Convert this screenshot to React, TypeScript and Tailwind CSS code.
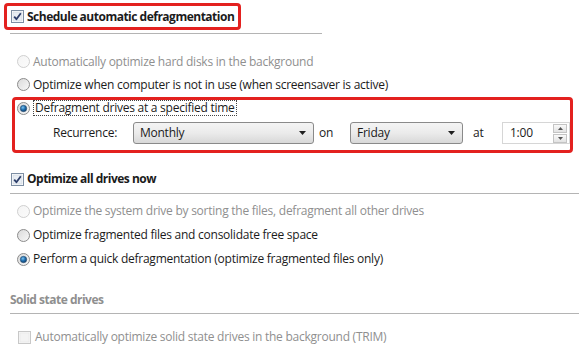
import React from "react";

const Radio = ({ checked = false, disabled = false }: { checked?: boolean; disabled?: boolean }) => (
  <svg width="13" height="13" viewBox="0 0 13 13" className="shrink-0">
    <defs>
      <linearGradient id={`rg${disabled ? "d" : "e"}`} x1="0" y1="0" x2="1" y2="1">
        <stop offset="0" stopColor={disabled ? "#f4f4f4" : "#d9d9d9"} />
        <stop offset="1" stopColor={disabled ? "#fbfbfb" : "#f9f9f9"} />
      </linearGradient>
      <radialGradient id="rdot" cx="0.4" cy="0.35" r="0.7">
        <stop offset="0" stopColor="#7fc4f0" />
        <stop offset="0.5" stopColor="#1f6fb0" />
        <stop offset="1" stopColor="#0d3a66" />
      </radialGradient>
    </defs>
    <circle cx="6.5" cy="6.5" r="6" fill={`url(#rg${disabled ? "d" : "e"})`} stroke={disabled ? "#cfcfcf" : "#8c8c8c"} strokeWidth="1" />
    {checked && <circle cx="6.5" cy="6.5" r="3.2" fill="url(#rdot)" stroke="#2b4d6e" strokeWidth="0.6" />}
  </svg>
);

const Check = ({ checked = false, disabled = false }: { checked?: boolean; disabled?: boolean }) => (
  <svg width="13" height="13" viewBox="0 0 13 13" className="shrink-0">
    <rect x="0.5" y="0.5" width="12" height="12" fill={disabled ? "#f7f7f7" : "#ffffff"} stroke={disabled ? "#c8c8c8" : "#7d8ea3"} />
    <rect x="2" y="2" width="9" height="9" fill={disabled ? "#f3f3f3" : "#e8edf3"} stroke={disabled ? "#e6e6e6" : "#c9d3de"} strokeWidth="0.6" />
    {checked && <path d="M3.2 6.6 L5.4 9.2 L9.8 3.2" fill="none" stroke="#2c3e6a" strokeWidth="1.8" strokeLinejoin="round" />}
  </svg>
);

const Arrow = () => (
  <svg width="7" height="4" viewBox="0 0 7 4">
    <path d="M0 0 L7 0 L3.5 4 Z" fill="#1f1f1f" />
  </svg>
);

const Select = ({ value, w }: { value: string; w: string }) => (
  <div className={`${w} h-[22px] flex items-center justify-between pl-[6px] pr-[7px] rounded-[3px] border border-[#8a8a8a] bg-gradient-to-b from-[#f4f4f4] via-[#ebebeb] to-[#d8d8d8] text-[#1a1a1a]`}>
    <span>{value}</span>
    <Arrow />
  </div>
);

export default function App() {
  return (
    <div className="w-[579px] h-[359px] bg-white overflow-hidden text-[12px] leading-none tracking-[-0.25px] whitespace-nowrap text-[#1b1b1b] [font-family:'Open_Sans','Noto_Sans',sans-serif]">
      <div className="pt-[3px] pl-[4px]">
        <div className="w-[237px] h-[27px] border-[3px] border-[#e3211f] rounded-[4px] flex items-center pl-[4px] gap-[3px]">
          <Check checked />
          <span className="font-bold text-[12px] tracking-[-0.5px]">Schedule automatic defragmentation</span>
        </div>
      </div>
      <div className="mt-[3px] ml-[10px] w-[312px] h-px bg-[#b4b4b4]" />
      <div className="mt-[16px] pl-[17px]">
        <div className="h-[23px] flex items-center gap-[3px] text-[#8f8f8f]">
          <Radio disabled />
          <span>Automatically optimize hard disks in the background</span>
        </div>
        <div className="h-[23px] flex items-center gap-[3px]">
          <Radio />
          <span>Optimize when computer is not in use (when screensaver is active)</span>
        </div>
      </div>
      <div className="mt-px ml-[12px] w-[561px] h-[56px] border-[3px] border-[#e3211f] rounded-[4px] flex flex-col">
        <div className="h-[16px] pl-[2px] flex items-center gap-[3px]">
          <Radio checked />
          <span className="border border-dotted border-[#444] px-px py-[1px]">Defragment drives at a specified time</span>
        </div>
        <div className="mt-[6px] h-[22px] flex items-center">
          <span className="ml-[38px] w-[80px]">Recurrence:</span>
          <Select value="Monthly" w="w-[181px]" />
          <span className="ml-[5px] w-[31px]">on</span>
          <Select value="Friday" w="w-[113px]" />
          <span className="ml-[10px] w-[29px]">at</span>
          <div className="w-[68px] h-[22px] flex items-center justify-between border border-[#d6d6d6] bg-white pl-[7px] pr-[2px]">
            <span>1:00</span>
            <div className="flex flex-col gap-px">
              <div className="w-[14px] h-[9px] border border-[#c4c4c4] bg-gradient-to-b from-[#fafafa] to-[#e2e2e2] flex items-center justify-center">
                <svg width="5" height="3" viewBox="0 0 5 3"><path d="M0 3 L5 3 L2.5 0 Z" fill="#555" /></svg>
              </div>
              <div className="w-[14px] h-[9px] border border-[#c4c4c4] bg-gradient-to-b from-[#fafafa] to-[#e2e2e2] flex items-center justify-center">
                <svg width="5" height="3" viewBox="0 0 5 3"><path d="M0 0 L5 0 L2.5 3 Z" fill="#555" /></svg>
              </div>
            </div>
          </div>
        </div>
      </div>
      <div className="mt-[17px] h-[18px] pl-[11px] flex items-center gap-[3px]">
        <Check checked />
        <span className="font-bold text-[12px] tracking-[-0.5px]">Optimize all drives now</span>
      </div>
      <div className="mt-[5px] ml-[10px] h-px bg-[#b4b4b4]" />
      <div className="mt-[5px] pl-[17px]">
        <div className="h-[24px] flex items-center gap-[3px] text-[#8f8f8f]">
          <Radio disabled />
          <span>Optimize the system drive by sorting the files, defragment all other drives</span>
        </div>
        <div className="h-[24px] flex items-center gap-[3px]">
          <Radio />
          <span>Optimize fragmented files and consolidate free space</span>
        </div>
        <div className="h-[24px] flex items-center gap-[3px]">
          <Radio checked />
          <span>Perform a quick defragmentation (optimize fragmented files only)</span>
        </div>
      </div>
      <div className="mt-[21px] h-[16px] pl-[10px] flex items-center font-bold tracking-[-0.5px] text-[#8f8f8f]">Solid state drives</div>
      <div className="mt-[5px] ml-[10px] h-px bg-[#b4b4b4]" />
      <div className="mt-[14px] h-[18px] pl-[18px] flex items-center gap-[4px] text-[#8f8f8f]">
        <Check disabled />
        <span>Automatically optimize solid state drives in the background (TRIM)</span>
      </div>
    </div>
  );
}
